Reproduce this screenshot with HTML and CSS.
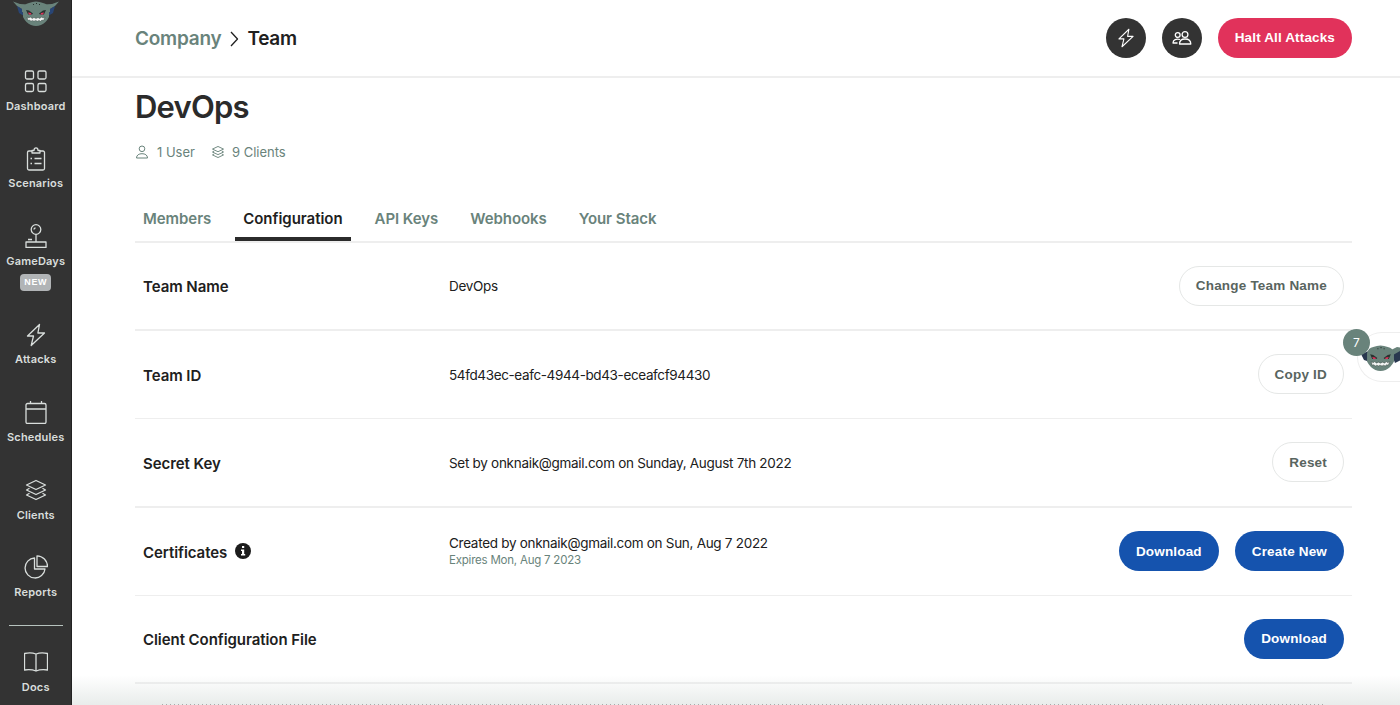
FILE: index.html
```html
<!DOCTYPE html>
<html lang="en">
<head>
<meta charset="utf-8">
<title>Team Configuration</title>
<link rel="stylesheet" href="styles.css">
</head>
<body>
<svg class="defs" width="0" height="0" aria-hidden="true">
  <symbol id="bolt" viewBox="0 0 24 24"><path d="M15.500 1.500 3.500 13h6L7.200 22.500 20.500 10h-6.600z"/></symbol>
  <symbol id="layers" viewBox="0 0 24 24"><path d="M12 2.500 2.500 7 12 11.500 21.500 7zM5.500 10.300 2.500 12 12 16.500 21.500 12 18.500 10.300M5.500 15.300 2.500 17 12 21.500 21.500 17 18.500 15.300"/></symbol>
  <symbol id="face" viewBox="0 0 28 26">
    <path fill="#69837b" d="M1 8Q2 3 7 2 14-1 21 2 26 3 27 8L27 16Q24 22 19 24 14 26 9 24 4 22 1 16z"/>
    <path fill="#29322f" d="m4 9 3 .5 4 3-1 1H6zM24 9l-3 .5-4 3 1 1h4z"/>
    <path fill="#e1325b" d="m6 11.500 3 .5.500 1.500H7zM22 11.500l-3 .5-.5 1.500H21z"/>
    <path fill="#f4f6f5" stroke="#29322f" stroke-width=".4" d="m5 16 2 1 1.500-1 1.500 1.500 2-1 2 1 2-1 2 1 1.500-1.500 1.500 1 2-1-1.500 3.500-1.500-.5-1.500 1.200-1.500-.8-1.500.8-2-.8-1.500.8-1.500-.8-1.500.8-1.500-1.200-1.500.5z"/>
    <path fill="#29322f" d="M11 3h1v1h-1zM14 2h1v1h-1zM17 3h1v1h-1z"/>
  </symbol>
</svg>
<div class="app">
  <nav class="sidebar">
    <div class="logo"><svg width="46" height="26" viewBox="0 0 46 26">
      <path fill="#69837b" d="M0 .5 7 3 15 3.500V14L9 11 9 8 4 5zM46 .5 39 3 31 3.500V14l6-3V8l5-3z"/>
      <path fill="#264c8c" d="m4 5 5 3v3l3 2-1 2-5-3zM42 5l-5 3v3l-3 2 1 2 5-3z" opacity=".75"/>
      <use href="#face" x="9" y="0" width="28" height="26"/></svg></div>
    <a class="item"><svg class="icon" viewBox="0 0 24 24"><rect x="1.500" y="2" width="8" height="8" rx="1.500"/><rect x="14" y="2" width="8" height="8" rx="1.500"/><rect x="1.500" y="14.500" width="8" height="8" rx="1.500"/><rect x="14" y="14.500" width="8" height="8" rx="1.500"/></svg><span>Dashboard</span></a>
    <a class="item"><svg class="icon" viewBox="0 0 24 24"><path d="M8 4H5a1.500 1.500 0 0 0-1.500 1.500v16A1.500 1.500 0 0 0 5 23h14a1.500 1.500 0 0 0 1.500-1.500v-16A1.500 1.500 0 0 0 19 4h-3M8 6V3.500h2C10 0 14 0 14 3.500h2V6zM6.500 11.500h1.500M10.500 11.500H17.500M6.500 16.500h1.500M10.500 16.500H17.500"/></svg><span>Scenarios</span></a>
    <a class="item item-new"><svg class="icon" viewBox="0 0 24 24"><circle cx="12" cy="5.500" r="4.800"/><path d="M12 10.300V18M4 15.500h4M2 18h20v5.500H2z"/><path d="M10 5.500Q10 4 11.500 4"/></svg><span>GameDays</span><b class="tag">NEW</b></a>
    <a class="item"><svg class="icon"><use href="#bolt"/></svg><span>Attacks</span></a>
    <a class="item"><svg class="icon" viewBox="0 0 24 24"><rect x="2" y="3.500" width="20" height="20" rx="1.500"/><path d="M2 9h20M6.500 1v3M17.500 1v3"/></svg><span>Schedules</span></a>
    <a class="item"><svg class="icon"><use href="#layers"/></svg><span>Clients</span></a>
    <a class="item"><svg class="icon" viewBox="0 0 24 24"><path d="M10.500 3A10 10 0 1 0 21 14H10.500zM13 .8V11.500h10.500A10.700 10.700 0 0 0 13 .8z"/></svg><span>Reports</span></a>
    <div class="divider"></div>
    <a class="item"><svg class="icon" viewBox="0 0 24 24"><path d="M12 4Q7 2 .5 3.500V20Q7 19 12 21zM12 4q5-2 11.500-.5V20Q17 19 12 21z"/></svg><span>Docs</span></a>
  </nav>
  <main class="main">
    <header class="topbar">
      <div class="crumbs"><a class="company">Company</a><svg width="9" height="16" viewBox="0 0 9 16"><path d="m1 1 6.500 7L1 15"/></svg><b class="here">Team</b></div>
      <div class="actions">
        <button class="round"><svg width="20" height="22"><use href="#bolt"/></svg></button>
        <button class="round"><svg width="20" height="20" viewBox="0 0 20 20"><circle cx="13" cy="6.500" r="2.900"/><circle cx="5.700" cy="7" r="2.400"/><path d="M7.500 16c0-3.500 2.300-5 5.500-5s5.800 1.500 5.800 5zM8 11.500C4.500 10.500 1 11.500 1 15h4.500"/></svg></button>
        <button class="btn halt">Halt All Attacks</button>
      </div>
    </header>
    <div class="content">
      <h1 class="title">DevOps</h1>
      <div class="meta">
        <svg width="14" height="14" viewBox="0 0 14 14"><circle cx="7" cy="3.800" r="2.800"/><path d="M1.500 13c0-3 2.500-4.300 5.500-4.300s5.500 1.300 5.500 4.300z"/></svg><span class="users">1 User</span>
        <svg class="stack" width="14" height="14"><use href="#layers"/></svg><span class="clients">9 Clients</span>
      </div>
      <div class="tabs"><a class="tab">Members</a><a class="tab active">Configuration</a><a class="tab">API Keys</a><a class="tab">Webhooks</a><a class="tab">Your Stack</a></div>
      <section class="rows">
        <div class="row"><b class="label">Team Name</b><span class="value">DevOps</span><div class="buttons"><button class="btn plain">Change Team Name</button></div></div>
        <div class="row"><b class="label">Team ID</b><span class="value uuid">54fd43ec-eafc-4944-bd43-eceafcf94430</span><div class="buttons"><button class="btn plain">Copy ID</button></div></div>
        <div class="row"><b class="label">Secret Key</b><span class="value">Set by onknaik@gmail.com on Sunday, August 7th 2022</span><div class="buttons"><button class="btn plain">Reset</button></div></div>
        <div class="row"><b class="label">Certificates <svg class="info" width="16" height="16" viewBox="0 0 16 16"><circle cx="8" cy="8" r="8"/><path d="M7 3h2.200v2H7zM6 6.500h3.200v4.500h1v1.500H6V11h1V8H6z"/></svg></b><span class="value">Created by onknaik@gmail.com on Sun, Aug 7 2022<small class="expires">Expires Mon, Aug 7 2023</small></span><div class="buttons"><button class="btn blue">Download</button><button class="btn blue">Create New</button></div></div>
        <div class="row"><b class="label">Client Configuration File</b><span class="value"></span><div class="buttons"><button class="btn blue">Download</button></div></div>
      </section>
    </div>
  </main>
</div>
<div class="bottom-shade"></div>
<div class="helper"><svg width="42" height="27" viewBox="0 0 42 27">
  <path fill="#29384f" d="M0 9 8 6 11 11 9 17 3 15zM42 6 35 5 31 10 34 18 42 14z"/>
  <path fill="#69837b" d="m30 5 6-3 6 1-3 3-7 4z"/>
  <use href="#face" x="5" y="0" width="29" height="27"/></svg><span class="count">7</span></div>
</body>
</html>
```
FILE: styles.css
```css
* { box-sizing: border-box; }
body { margin: 0; width: 1400px; height: 705px; overflow: hidden; background: #fff; color: #202020; font-family: Inter, "Liberation Sans", sans-serif; }
.defs { position: absolute; }
svg { flex: none; fill: none; stroke: currentColor; stroke-width: 1.3; stroke-linejoin: round; }
button { font: inherit; }
.app { display: flex; height: 705px; overflow: hidden; }
.sidebar { width: 71.5px; flex: none; display: flex; flex-direction: column; align-items: center; padding-left: 1px; background: #333; color: #d9dedc; border-right: 1px solid #222; overflow: hidden; }
.logo { height: 69px; flex: none; padding-top: 1px; }
.logo svg, .helper svg { stroke: none; display: block; }
.item { height: 77.6px; flex: none; display: flex; flex-direction: column; align-items: center; font-size: 11px; font-weight: 600; line-height: 14px; letter-spacing: .18px; }
.icon { width: 24px; height: 24px; margin-bottom: 5.9px; }
.item-new { height: 98.4px; }
.tag { margin-top: 6px; padding: 0 4px; border-radius: 4px; background: #b1b4b6; color: #fff; font: bold 9px/17px "Liberation Sans", sans-serif; letter-spacing: .7px; }
.divider { flex: none; width: 54px; height: 1px; background: #b7c3be; margin: -7.5px 0 23.5px; }
.main { flex: 1; }
.topbar { height: 77.5px; border-bottom: 2px solid #eee; padding: 1px 48px 2px 63.5px; display: flex; justify-content: space-between; align-items: center; }
.crumbs { display: flex; align-items: center; gap: 9px; padding-top: 3px; font-size: 19px; font-weight: 600; line-height: 24px; letter-spacing: -.25px; }
.crumbs svg { margin-right: -1px; }
.company { color: #69837b; }
.here { font-weight: 600; }
.actions { display: flex; gap: 16px; padding-top: 1px; }
.round { width: 40px; height: 40px; border: 0; border-radius: 50%; background: #333; color: #fff; padding: 0; display: flex; align-items: center; justify-content: center; }
.btn { height: 40px; border: 0; border-radius: 20px; padding: 0 17px; font: bold 13.5px "Liberation Sans", sans-serif; letter-spacing: .14px; color: #fff; white-space: nowrap; }
.halt { background: #e1325b; }
.blue { background: #1553ae; letter-spacing: .17px; }
.plain { background: #fff; color: #59655f; border: 1px solid #e5e7e6; padding: 0 16px; letter-spacing: .2px; }
.content { padding: 0 48px 0 63.5px; }
.title { margin: 10px 0 0; font-size: 31px; line-height: 38px; font-weight: 600; color: #2b2b2b; letter-spacing: -.8px; }
.meta { display: flex; align-items: center; margin-top: 17px; height: 18px; color: #69837b; font-size: 13px; }
.meta svg { stroke-width: 1; }
.meta .stack { stroke-width: 1.6; }
.users { margin: 0 16px 0 8px; }
.clients { margin-left: 7px; }
.tabs { display: flex; gap: 16px; height: 82px; align-items: flex-end; border-bottom: 2px solid #eee; }
.tab { padding: 0 8px; height: 46px; line-height: 48px; font-size: 15px; font-weight: 600; letter-spacing: -.06px; color: #69837b; }
.active { color: #202020; letter-spacing: -.03px; box-shadow: inset 0 -4px #2b2b2b; }
.row { display: grid; grid-template-columns: 306px 1fr auto; align-items: center; height: 89.5px; padding: 0 8px; border-bottom: 2px solid #eee; }
.row:first-child { height: 88.5px; }
.row:nth-child(even) { height: 87.5px; border-bottom-width: 1px; }
.row:last-child { height: 88.5px; }
.label { padding-top: 2px; font-size: 15px; font-weight: 600; letter-spacing: -.06px; display: flex; align-items: center; gap: 8px; }
.value { padding-top: 1px; font-size: 13.5px; line-height: 18px; letter-spacing: -.29px; }
.uuid { letter-spacing: -.37px; }
.expires { display: block; font-size: 11.5px; line-height: 17px; letter-spacing: -.22px; color: #69837b; }
.buttons { display: flex; gap: 16px; }
.info { margin-top: -2px; stroke: none; fill: #1c1c1c; }
.info path { fill: #fff; }
.bottom-shade { position: absolute; left: 72px; right: 0; top: 675px; height: 30px; background: linear-gradient(rgba(225,230,228,0), rgba(225,230,228,.75)); }
.bottom-shade::after { content: ""; position: absolute; left: 90px; right: 76px; bottom: 0; height: 1px; background: repeating-linear-gradient(90deg, #aaa 0 1px, transparent 1px 4px); }
.helper { position: absolute; left: 1357px; top: 332px; width: 43px; height: 50px; border: 1px solid #eee; border-right: 0; border-radius: 25px 0 0 25px; background: #fff; padding: 12px 0 0 3px; overflow: visible; }
.count { position: absolute; left: -15px; top: -4px; width: 27px; height: 27px; border-radius: 50%; background: #69837b; color: #fff; font-size: 12px; line-height: 27px; text-align: center; }
```
